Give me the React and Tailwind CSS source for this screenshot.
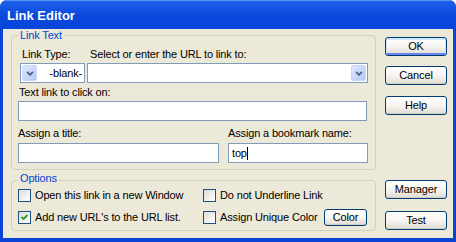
import React from "react";

const DropButton = () => (
    <span className="w-[15px] h-full rounded-[2px] border border-[#c8d7fa] bg-linear-to-br from-[#e0e9fd] to-[#b3c8f6] flex items-center justify-center">
        <svg width="8" height="5" viewBox="0 0 8 5">
            <path d="M1 0.8 L4 3.8 L7 0.8" stroke="#4d6185" strokeWidth="1.8" fill="none" />
        </svg>
    </span>
);

const Checkbox = ({ checked }) => (
    <span className="w-[13px] h-[13px] shrink-0 border border-[#1c5180] bg-linear-to-br from-[#dcdcd7] to-white flex items-center justify-center">
        {checked && (
            <svg width="7" height="7" viewBox="0 0 7 7">
                <path d="M0.5 3 L2.5 5 L6.5 1" stroke="#21a121" strokeWidth="1.8" fill="none" />
            </svg>
        )}
    </span>
);

const Button = ({ children, primary, size = "w-[62px] h-[19px]", className = "" }) => (
    <button
        className={`${size} shrink-0 rounded-[3px] border border-[#003c74] bg-linear-to-b from-white via-[#f6f5f1] to-[#dedbd0] text-[11px] leading-none text-black ${
            primary
                ? "shadow-[inset_0_1px_0_1px_#cee7ff,inset_0_-1px_0_1px_#6982ee]"
                : "shadow-[inset_0_-1px_0_#d6d0c5]"
        } ${className}`}
    >
        {children}
    </button>
);

const Group = ({ title, titleTop, className = "", children }) => (
    <div className={`relative w-[365px] border border-[#d0d0bf] rounded-[4px] ${className}`}>
        <span className={`absolute left-[6px] ${titleTop} px-[2px] bg-[#ece9d8] text-[#0046d5] leading-[13px]`}>
            {title}
        </span>
        {children}
    </div>
);

const TextBox = ({ className = "", children }) => (
    <div className={`h-[20px] border border-[#7f9db9] bg-white flex items-center ${className}`}>
        {children}
    </div>
);

const Option = ({ checked, label, children }) => (
    <div className="flex items-center h-[13px] whitespace-nowrap">
        <Checkbox checked={checked} />
        <span className="ml-[4px] leading-[13px]">{label}</span>
        {children}
    </div>
);

const App = () => {
    return (
        <div className="w-[456px] h-[242px] flex flex-col bg-[#0a43d6] rounded-t-[7px] overflow-hidden font-['Liberation_Sans',Arial,sans-serif] text-[11px] tracking-[-0.15px] text-black">
            {/* Title bar */}
            <div className="h-[29px] shrink-0 flex items-center px-[7px] border-t border-[#5b93f4] bg-linear-to-b from-[#1f62ec] via-[#0a48dc] to-[#0845da]">
                <span className="text-white font-bold text-[13px] tracking-normal mt-[1px]">Link Editor</span>
            </div>

            {/* Client area */}
            <div className="flex-1 mx-[3px] mb-[4px] bg-[#ece9d8] flex">
                <div className="ml-[8px] flex flex-col">
                    <Group title="Link Text" titleTop="-top-[7px]" className="mt-[6px] h-[135px] pt-[12px] pl-[6px]">
                        <div className="flex leading-[13px] h-[13px]">
                            <span className="ml-[4px] w-[68px]">Link Type:</span>
                            <span>Select or enter the URL to link to:</span>
                        </div>
                        <div className="flex mt-[2px] ml-[2px] gap-[2px]">
                            <TextBox className="w-[65px] p-px justify-between">
                                <DropButton />
                                <span className="pr-[1px]">-blank-</span>
                            </TextBox>
                            <TextBox className="w-[281px] p-px justify-end">
                                <DropButton />
                            </TextBox>
                        </div>
                        <div className="mt-[3px] leading-[13px] h-[13px] ml-[1px]">Text link to click on:</div>
                        <TextBox className="mt-[2px] w-[349px]" />
                        <div className="flex mt-[6px] leading-[13px] h-[13px]">
                            <span className="w-[210px]">Assign a title:</span>
                            <span>Assign a bookmark name:</span>
                        </div>
                        <div className="flex mt-[3px]">
                            <TextBox className="w-[201px]" />
                            <TextBox className="w-[140px] ml-[9px] pl-[3px]">
                                <span className="leading-[13px]">top</span>
                                <span className="w-px h-[13px] bg-black" />
                            </TextBox>
                        </div>
                    </Group>

                    <Group title="Options" titleTop="-top-[9px]" className="mt-[10px] h-[51px] pt-[8px] pl-[6px]">
                        <div className="grid grid-cols-[185px_1fr] gap-y-[9px]">
                            <Option label="Open this link in a new Window" />
                            <Option label="Do not Underline Link" />
                            <Option checked label="Add new URL's to the URL list." />
                            <Option label="Assign Unique Color">
                                <Button size="w-[43px] h-[17px]" className="ml-auto mr-[8px]">Color</Button>
                            </Option>
                        </div>
                    </Group>
                </div>

                {/* Buttons */}
                <div className="ml-[9px] flex flex-col">
                    <Button primary className="mt-[8px]">OK</Button>
                    <Button className="mt-[10px]">Cancel</Button>
                    <Button className="mt-[11px]">Help</Button>
                    <Button className="mt-[65px]">Manager</Button>
                    <Button className="mt-[12px]">Test</Button>
                </div>
            </div>
        </div>
    );
};

export default App;
